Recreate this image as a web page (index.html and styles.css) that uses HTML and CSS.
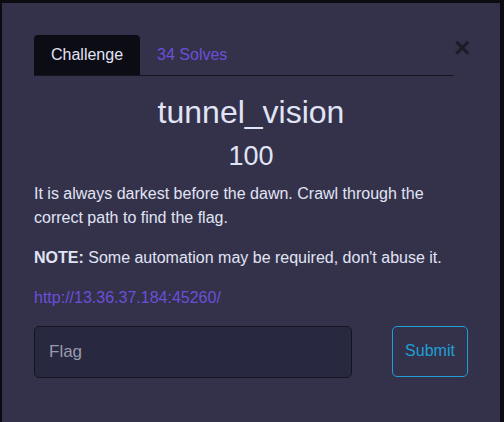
FILE: index.html
```html
<!DOCTYPE html>
<html>
<head>
<meta charset="utf-8">
<link rel="stylesheet" href="styles.css">
</head>
<body>
<div class="modal">
  <div class="header">
    <nav class="tabs">
      <span class="tab active">Challenge</span>
      <span class="tab">34 Solves</span>
    </nav>
    <span class="close">&times;</span>
  </div>
  <h2 class="title">tunnel_vision</h2>
  <h3 class="points">100</h3>
  <p class="desc">It is always darkest before the dawn. Crawl through the correct path to find the flag.</p>
  <p class="desc"><strong>NOTE:</strong> Some automation may be required, don't abuse it.</p>
  <p class="desc"><a class="link" href="#">http://13.36.37.184:45260/</a></p>
  <div class="form-row">
    <input class="flag" type="text" placeholder="Flag">
    <button class="submit">Submit</button>
  </div>
</div>
</body>
</html>
```
FILE: styles.css
```css
html, body {
  margin: 0;
  padding: 0;
  height: 100%;
  overflow: hidden;
}
body {
  background: #0b0b10;
  font-family: "Liberation Sans", Arial, sans-serif;
  color: #e1e4f5;
}
.modal {
  margin: 3px 0 0 2px;
  width: 498px;
  height: 430px;
  background: #33324a;
  padding: 32px 0 0 32px;
  box-sizing: border-box;
}
.header {
  display: flex;
  align-items: flex-start;
}
.tabs {
  display: flex;
  width: 420px;
  border-bottom: 1px solid #15151f;
}
.tab {
  display: block;
  padding: 8px 17px;
  font-size: 16px;
  line-height: 24px;
  color: #6b4fd8;
  border-radius: 4px 4px 0 0;
}
.tab.active {
  background: #0c0c15;
  color: #e1e4f5;
}
.close {
  margin-left: 0;
  margin-top: 1px;
  font-size: 28px;
  line-height: 24px;
  font-weight: bold;
  color: #1c1c28;
}
.title {
  margin: 17px 0 9px;
  width: 434px;
  text-align: center;
  font-size: 32px;
  font-weight: normal;
  line-height: 1.2;
}
.points {
  margin: 0 0 9px;
  width: 434px;
  text-align: center;
  font-size: 27px;
  font-weight: normal;
  line-height: 1.2;
}
.desc {
  margin: 0 0 16px;
  width: 434px;
  font-size: 16px;
  line-height: 24px;
}
.link {
  color: #6b4fd8;
  text-decoration: none;
}
.form-row {
  display: flex;
  justify-content: space-between;
  width: 434px;
}
.flag {
  width: 318px;
  height: 52px;
  box-sizing: border-box;
  background: #282840;
  border: 1px solid #15151f;
  border-radius: 5px;
  padding: 0 14px;
  font-family: "Liberation Sans", Arial, sans-serif;
  font-size: 17px;
  color: #e1e4f5;
}
.flag::placeholder {
  color: #9a9aad;
}
.submit {
  width: 76px;
  height: 51px;
  box-sizing: border-box;
  background: transparent;
  border: 1px solid #1f9fd6;
  border-radius: 5px;
  color: #1f9fd6;
  font-family: "Liberation Sans", Arial, sans-serif;
  font-size: 16px;
  padding: 0;
}
```
